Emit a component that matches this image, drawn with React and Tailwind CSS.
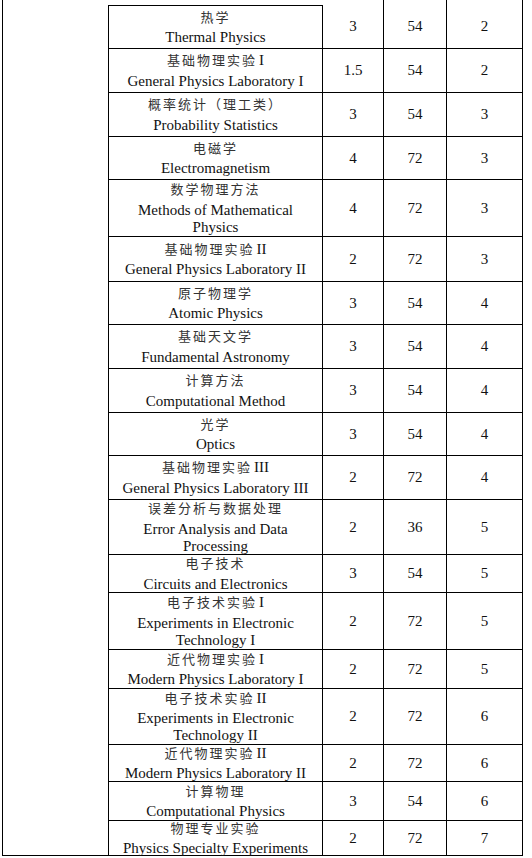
const courses = [
  { zh: '热学', en: ['Thermal Physics'], credit: '3', hours: '54', term: '2', h: 'h-[44px]' },
  { zh: '基础物理实验 I', en: ['General Physics Laboratory I'], credit: '1.5', hours: '54', term: '2', h: 'h-[44px]' },
  { zh: '概率统计（理工类）', en: ['Probability Statistics'], credit: '3', hours: '54', term: '3', h: 'h-[44px]' },
  { zh: '电磁学', en: ['Electromagnetism'], credit: '4', hours: '72', term: '3', h: 'h-[43px]' },
  { zh: '数学物理方法', en: ['Methods of Mathematical', 'Physics'], credit: '4', hours: '72', term: '3', h: 'h-[57px]' },
  { zh: '基础物理实验 II', en: ['General Physics Laboratory II'], credit: '2', hours: '72', term: '3', h: 'h-[45px]' },
  { zh: '原子物理学', en: ['Atomic Physics'], credit: '3', hours: '54', term: '4', h: 'h-[43px]' },
  { zh: '基础天文学', en: ['Fundamental Astronomy'], credit: '3', hours: '54', term: '4', h: 'h-[44px]' },
  { zh: '计算方法', en: ['Computational Method'], credit: '3', hours: '54', term: '4', h: 'h-[44px]' },
  { zh: '光学', en: ['Optics'], credit: '3', hours: '54', term: '4', h: 'h-[43px]' },
  { zh: '基础物理实验 III', en: ['General Physics Laboratory III'], credit: '2', hours: '72', term: '4', h: 'h-[44px]' },
  { zh: '误差分析与数据处理', en: ['Error Analysis and Data', 'Processing'], credit: '2', hours: '36', term: '5', h: 'h-[55px]' },
  { zh: '电子技术', en: ['Circuits and Electronics'], credit: '3', hours: '54', term: '5', h: 'h-[38px]' },
  { zh: '电子技术实验 I', en: ['Experiments in Electronic', 'Technology I'], credit: '2', hours: '72', term: '5', h: 'h-[57px]' },
  { zh: '近代物理实验 I', en: ['Modern Physics Laboratory I'], credit: '2', hours: '72', term: '5', h: 'h-[39px]' },
  { zh: '电子技术实验 II', en: ['Experiments in Electronic', 'Technology II'], credit: '2', hours: '72', term: '6', h: 'h-[56px]' },
  { zh: '近代物理实验 II', en: ['Modern Physics Laboratory II'], credit: '2', hours: '72', term: '6', h: 'h-[37px]' },
  { zh: '计算物理', en: ['Computational Physics'], credit: '3', hours: '54', term: '6', h: 'h-[39px]' },
  { zh: '物理专业实验', en: ['Physics Specialty Experiments'], credit: '2', hours: '72', term: '7', h: 'h-[35px]' },
];

const font = { fontFamily: '"Liberation Serif", "Noto Sans CJK SC", serif' };

// Chinese name, with a trailing roman numeral set in the Latin face
const ZhName = ({ text }) => {
  const [name, num] = text.split(' ');
  return (
    <div className="h-[18px] leading-[18px] text-[#333] whitespace-nowrap">
      <span className="text-[13px] tracking-[2px]">{name}</span>
      {num && <span className="text-[15px] text-[#111] ml-[2px]">{num}</span>}
    </div>
  );
};

const CourseRow = ({ c, first }) => (
  <div className={`flex ${c.h}`}>
    <div
      className={`w-[214px] border-l border-b border-black flex flex-col justify-center items-center text-center ${
        first ? 'border-t' : ''
      }`}
    >
      <ZhName text={c.zh} />
      <div className="mt-[3.5px]">
        {c.en.map((line) => (
          <div key={line} className="h-[17px] leading-[17px] text-[15px] text-[#111] whitespace-nowrap">
            {line}
          </div>
        ))}
      </div>
    </div>
    <div className="w-[61px] border-l border-b border-black flex items-center justify-center text-[15px] text-[#111]">
      {c.credit}
    </div>
    <div className="w-[63px] border-l border-b border-black flex items-center justify-center text-[15px] text-[#111]">
      {c.hours}
    </div>
    <div className="w-[77px] border-l border-r border-b border-black flex items-center justify-center text-[15px] text-[#111]">
      {c.term}
    </div>
  </div>
);

export default function App() {
  return (
    <div className="bg-white w-[532px] min-h-[858px]" style={font}>
      <div className="flex items-stretch">
        <div className="ml-[2px] w-[106px] border-l border-b border-black" />
        <div className="flex flex-col">
          <div className="flex h-[5px]">
            <div className="w-[214px]" />
            <div className="w-[61px]" />
            <div className="w-[63px] border-l border-black" />
            <div className="w-[77px] border-l border-r border-black" />
          </div>
          {courses.map((c, i) => (
            <CourseRow key={c.zh} c={c} first={i === 0} />
          ))}
        </div>
      </div>
    </div>
  );
}
